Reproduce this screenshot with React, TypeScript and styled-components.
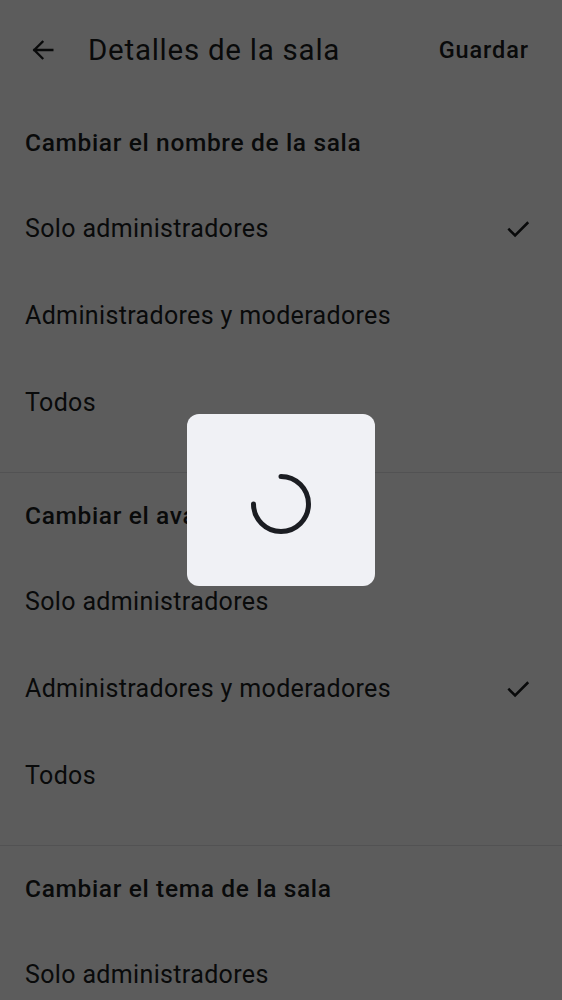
import React from "react";
import styled, { createGlobalStyle } from "styled-components";

const Global = createGlobalStyle`
  html, body { margin: 0; padding: 0; background: #ffffff; }
  body { font-family: Roboto, "Noto Sans", sans-serif; color: #1a1c1e; }
  * { box-sizing: border-box; }
`;

const Page = styled.div`
  width: 562px;
  height: 1000px;
  overflow: hidden;
  background: #ffffff;
`;

const TopBar = styled.header`
  height: 100px;
  display: flex;
  align-items: center;
  padding: 0 33px 0 28px;
  gap: 30px;
`;

const BackButton = styled.button`
  border: 0;
  background: none;
  padding: 0;
  width: 30px;
  height: 30px;
  display: flex;
  align-items: center;
  justify-content: center;
  color: #1a1c1e;
`;

const Title = styled.h1`
  flex: 1;
  margin: 0;
  font-size: 29.5px;
  font-weight: 400;
  letter-spacing: 0.75px;
`;

const SaveButton = styled.button`
  border: 0;
  background: none;
  padding: 0;
  font-family: Roboto, sans-serif;
  font-size: 23.5px;
  font-weight: 500;
  color: #1a1c1e;
  letter-spacing: 0.9px;
`;

const Section = styled.section<{ $divider?: boolean }>`
  padding-bottom: 26px;
  border-bottom: ${(p) => (p.$divider ? "1px solid #e3e3e6" : "0")};
`;

const SectionTitle = styled.h2`
  margin: 0;
  height: 85px;
  display: flex;
  align-items: center;
  padding: 0 25px;
  font-size: 24.5px;
  font-weight: 500;
  letter-spacing: 0.65px;
`;

const Option = styled.div`
  height: 87px;
  display: flex;
  align-items: center;
  justify-content: space-between;
  padding: 0 30px 0 25px;
  font-size: 25px;
  font-weight: 400;
  letter-spacing: 0.35px;
`;

const Scrim = styled.div`
  position: fixed;
  inset: 0;
  background: rgba(0, 0, 0, 0.64);
  display: flex;
  align-items: center;
  justify-content: center;
`;

const LoadingCard = styled.div`
  width: 188px;
  height: 172px;
  background: #f0f1f5;
  border-radius: 12px;
  display: flex;
  align-items: center;
  justify-content: center;
  padding-top: 8px;
`;

const Check = () => (
  <svg width="28" height="28" viewBox="0 0 24 24" fill="none">
    <path d="M4.5 12.5l5 5L20 7" stroke="#1a1c1e" strokeWidth="2.2" strokeLinecap="square" />
  </svg>
);

const Arrow = () => (
  <svg width="28" height="28" viewBox="0 0 24 24" fill="none">
    <path d="M20 12H4.5M11.5 5l-7 7 7 7" stroke="#1a1c1e" strokeWidth="2" strokeLinecap="square" />
  </svg>
);

const Spinner = () => (
  <svg width="66" height="66" viewBox="0 0 66 66" fill="none">
    <path
      d="M33 5.5 A27.5 27.5 0 1 1 5.5 33"
      stroke="#1b1d22"
      strokeWidth="5"
      strokeLinecap="round"
    />
  </svg>
);

type Sec = { title: string; selected: number };
const sections: Sec[] = [
  { title: "Cambiar el nombre de la sala", selected: 0 },
  { title: "Cambiar el avatar de la sala", selected: 1 },
  { title: "Cambiar el tema de la sala", selected: 1 },
];
const options = ["Solo administradores", "Administradores y moderadores", "Todos"];

export default function App() {
  return (
    <Page>
      <Global />
      <TopBar>
        <BackButton aria-label="Atrás">
          <Arrow />
        </BackButton>
        <Title>Detalles de la sala</Title>
        <SaveButton>Guardar</SaveButton>
      </TopBar>
      {sections.map((s, i) => (
        <Section key={s.title} $divider={i < sections.length - 1}>
          <SectionTitle>{s.title}</SectionTitle>
          {options.map((o, j) => (
            <Option key={o}>
              <span>{o}</span>
              {j === s.selected && <Check />}
            </Option>
          ))}
        </Section>
      ))}
      <Scrim>
        <LoadingCard>
          <Spinner />
        </LoadingCard>
      </Scrim>
    </Page>
  );
}
